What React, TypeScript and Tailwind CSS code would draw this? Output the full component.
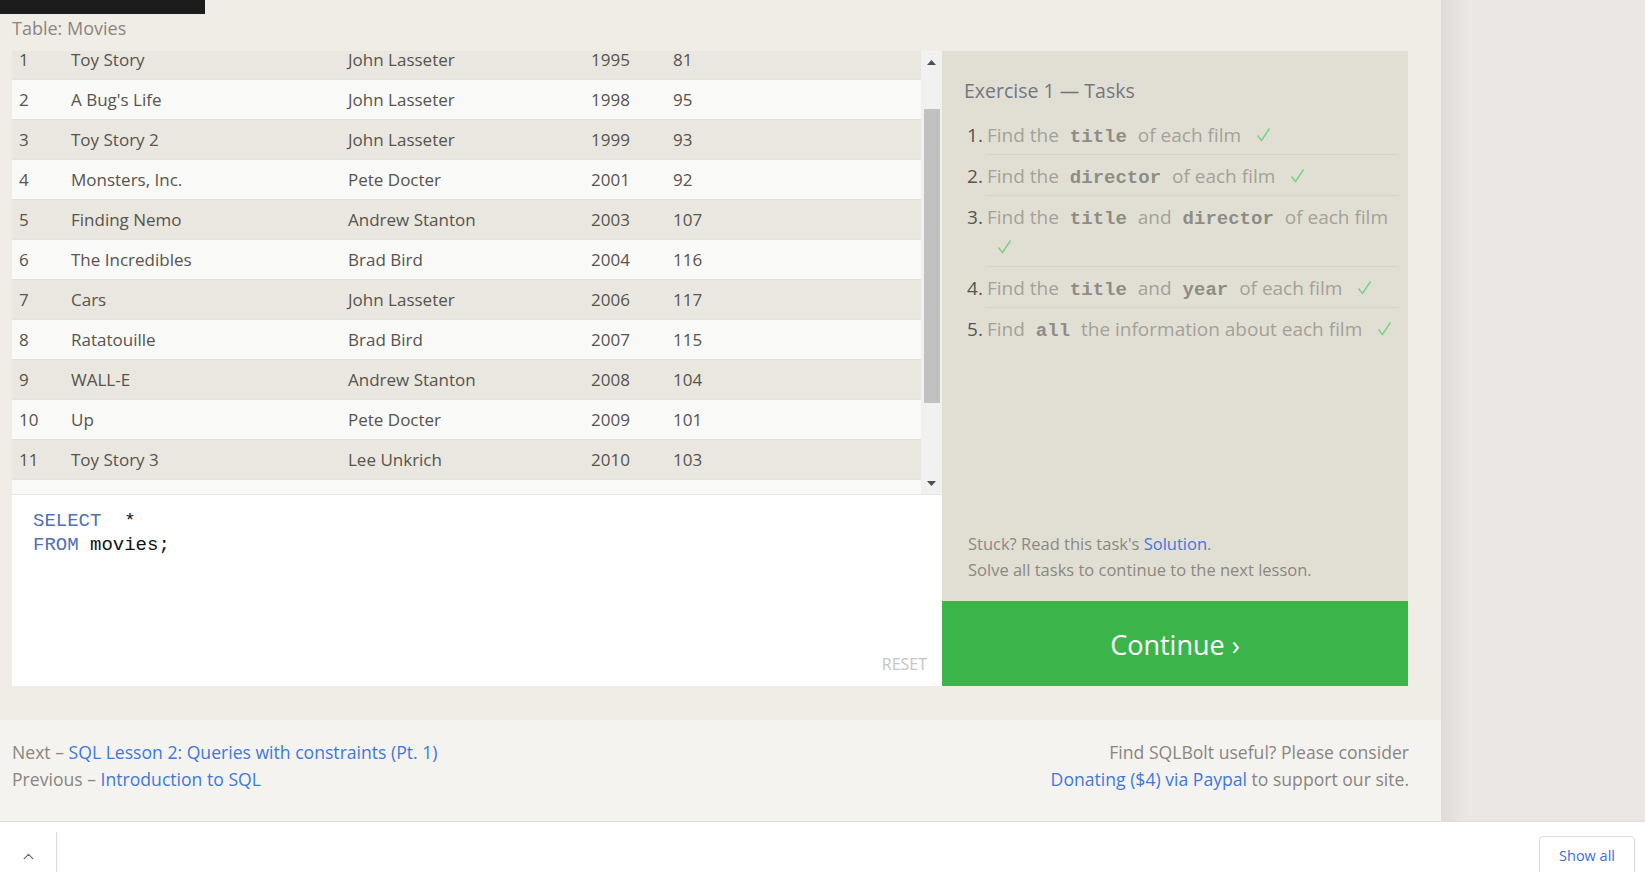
import { ChevronUp } from 'lucide-react';

const movies: [number, string, string, number, number][] = [
  [1, 'Toy Story', 'John Lasseter', 1995, 81],
  [2, "A Bug's Life", 'John Lasseter', 1998, 95],
  [3, 'Toy Story 2', 'John Lasseter', 1999, 93],
  [4, 'Monsters, Inc.', 'Pete Docter', 2001, 92],
  [5, 'Finding Nemo', 'Andrew Stanton', 2003, 107],
  [6, 'The Incredibles', 'Brad Bird', 2004, 116],
  [7, 'Cars', 'John Lasseter', 2006, 117],
  [8, 'Ratatouille', 'Brad Bird', 2007, 115],
  [9, 'WALL-E', 'Andrew Stanton', 2008, 104],
  [10, 'Up', 'Pete Docter', 2009, 101],
  [11, 'Toy Story 3', 'Lee Unkrich', 2010, 103],
  [12, 'Cars 2', 'John Lasseter', 2011, 120],
  [13, 'Brave', 'Brenda Chapman', 2012, 102],
  [14, 'Monsters University', 'Dan Scanlon', 2013, 110],
];

const Check = () => (
  <svg width="15" height="15" viewBox="0 0 15 15" className="ml-[10px] inline-block align-baseline">
    <path d="M1.5 8.5 L5.5 13.5 L13.5 1.5" fill="none" stroke="#78d184" strokeWidth="1.4" />
  </svg>
);

const Code = ({ children }: { children: string }) => (
  <code className="px-[6px] font-['Liberation_Mono',monospace] text-[19px] leading-none font-bold text-[#8e8c86]">
    {children}
  </code>
);

const tasks = [
  <>Find the <Code>title</Code> of each film</>,
  <>Find the <Code>director</Code> of each film</>,
  <>Find the <Code>title</Code> and <Code>director</Code> of each film</>,
  <>Find the <Code>title</Code> and <Code>year</Code> of each film</>,
  <>Find <Code>all</Code> the information about each film</>,
];

const Triangle = ({ up }: { up?: boolean }) => (
  <svg width="9" height="5" viewBox="0 0 9 5">
    <path d={up ? 'M0 5 L4.5 0 L9 5 Z' : 'M0 0 L4.5 5 L9 0 Z'} fill="#505050" />
  </svg>
);

const App = () => {
  return (
    <div className="h-[872px] w-full overflow-hidden bg-white font-['Open_Sans',sans-serif]">
      <div className="flex h-[821px]">
        <main className="flex w-[1441px] flex-col bg-[#f0ede6]">
          <div className="h-[14px] w-[205px] bg-[#1c1c1c]" />
          <div className="h-[37px] pl-[12px] pt-[2px] text-[18px] leading-[24px] text-[#8b8680]">Table: Movies</div>

          <div className="flex h-[635px] pl-[12px] pr-[33px]">
            {/* query + result */}
            <div className="flex w-[930px] flex-col">
              <div className="flex h-[443px]">
                <div className="w-[909px] overflow-hidden">
                  <div className="-mt-[11px]">
                    {movies.map(([id, title, director, year, len], i) => (
                      <div
                        key={id}
                        className={`grid h-[40px] grid-cols-[52px_277px_243px_82px_1fr] items-center border-b border-[#e3e1db] pl-[7px] text-[17px] text-[#58534d] ${
                          i % 2 === 0 ? 'bg-[#e9e7e0]' : 'bg-[#f9f9f8]'
                        }`}
                      >
                        <span>{id}</span>
                        <span>{title}</span>
                        <span>{director}</span>
                        <span>{year}</span>
                        <span>{len}</span>
                      </div>
                    ))}
                  </div>
                </div>
                <div className="flex w-[21px] flex-col items-center bg-[#f1f1f1]">
                  <div className="flex h-[22px] items-center justify-center">
                    <Triangle up />
                  </div>
                  <div className="mt-[36px] h-[294px] w-[16px] bg-[#c1c1c1]" />
                  <div className="flex-1" />
                  <div className="flex h-[22px] items-center justify-center">
                    <Triangle />
                  </div>
                </div>
              </div>

              <div className="flex h-[192px] flex-col border-t border-[#e8e6e0] bg-white">
                <pre className="pl-[21px] pt-[14px] font-['Liberation_Mono',monospace] text-[19px] leading-[24px] text-[#111]">
                  <span className="text-[#5070b8]">SELECT</span>  *{'\n'}
                  <span className="text-[#5070b8]">FROM</span> movies;
                </pre>
                <div className="flex-1" />
                <div className="self-end pb-[10px] pr-[15px] text-[16px] leading-[24px] text-[#c4c4c4]">RESET</div>
              </div>
            </div>

            {/* tasks */}
            <div className="flex w-[466px] flex-col">
              <div className="flex h-[550px] flex-col bg-[#e1dfd4] pl-[22px] pr-[11px]">
                <h2 className="pt-[26px] text-[19.5px] leading-[28px] text-[#727681]">Exercise 1 — Tasks</h2>
                <ol className="mt-[9px] pl-[3px]">
                  {tasks.map((t, i) => (
                    <li key={i} className="flex text-[19px] leading-[30px]">
                      <span className="w-[20px] shrink-0 pt-[6px] text-[#57534d]">{i + 1}.</span>
                      <div
                        className={`flex-1 pb-[4px] pt-[6px] text-[#a4a19a] ${
                          i < tasks.length - 1 ? 'border-b border-[#d6d4c9]' : ''
                        }`}
                      >
                        {t} <Check />
                      </div>
                    </li>
                  ))}
                </ol>
                <div className="flex-1" />
                <div className="pb-[18px] pl-[4px] text-[16.5px] leading-[26px] text-[#8c8781]">
                  <div>
                    Stuck? Read this task's <a className="text-[#3f78db]">Solution</a>.
                  </div>
                  <div>Solve all tasks to continue to the next lesson.</div>
                </div>
              </div>
              <button className="flex h-[85px] items-center justify-center bg-[#3bb54a] pt-[4px] text-[27px] text-white">
                Continue ›
              </button>
            </div>
          </div>

          <div className="h-[34px]" />

          <footer className="flex h-[101px] justify-between bg-[#f5f3f0] pl-[12px] pr-[32px] pt-[19px] text-[17.6px] leading-[27px] text-[#8a857f]">
            <div>
              <div>
                Next – <a className="text-[#3f78db]">SQL Lesson 2: Queries with constraints (Pt. 1)</a>
              </div>
              <div>
                Previous – <a className="text-[#3f78db]">Introduction to SQL</a>
              </div>
            </div>
            <div className="text-right">
              <div>Find SQLBolt useful? Please consider</div>
              <div>
                <a className="text-[#3f78db]">Donating ($4) via Paypal</a> to support our site.
              </div>
            </div>
          </footer>
        </main>
        <aside className="flex flex-1 bg-[#ebe7e4]">
          <div className="w-[26px] bg-linear-to-r from-[#dedbd8] to-[#ebe7e4]" />
        </aside>
      </div>

      {/* download bar */}
      <div className="flex h-[51px] border-t border-[#dedede] bg-white">
        <div className="flex w-[56px] items-center justify-center pt-[18px]">
          <ChevronUp size={17} strokeWidth={1.8} className="text-[#6a6a6a]" />
        </div>
        <div className="mt-[10px] h-[41px] border-l border-[#dadada]" />
        <div className="flex-1" />
        <button className="mr-[10px] mt-[14px] h-[44px] rounded-[4px] border border-[#dadce0] px-[19px] pb-[4px] text-[14.5px] font-medium text-[#3b6fd9]">
          Show all
        </button>
      </div>
    </div>
  );
};

export default App;
